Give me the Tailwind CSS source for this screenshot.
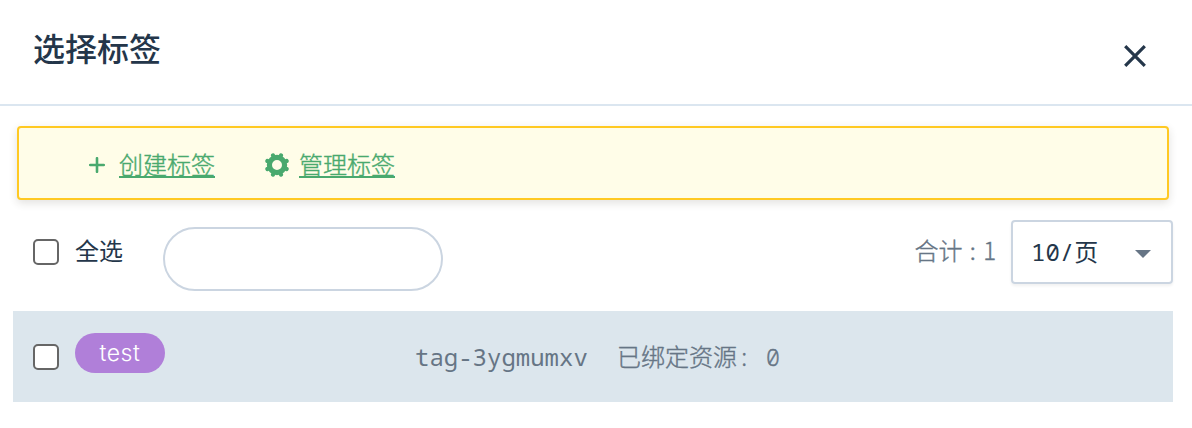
<!DOCTYPE html>
<html lang="zh-CN">
<head>
<meta charset="utf-8">
<title>选择标签</title>
<script src="https://cdn.jsdelivr.net/npm/@tailwindcss/browser@4"></script>
</head>
<body class="h-[428px] w-[1192px] overflow-hidden bg-white font-['Noto_Sans_CJK_SC',sans-serif] text-[24px] font-normal text-[#24364a]">
<header class="flex h-[106px] items-start justify-between border-b-2 border-[#dbe6f0] pl-[33px] pr-[46px]">
  <h1 class="mt-[23px] text-[32px] leading-[48px] font-medium">选择标签</h1>
  <button class="mt-[45px] size-[22px]" aria-label="关闭">
    <svg class="block size-[22px]" viewBox="0 0 22 22" fill="none" stroke="#24364a" stroke-width="3.2"><path d="M1.2 1.2 20.8 20.8M20.8 1.2 1.2 20.8"/></svg>
  </button>
</header>
<main class="pt-[20px]">
  <div class="ml-[17px] flex h-[74px] w-[1152px] items-center rounded-[4px] border-2 border-[#ffc922] bg-[#fffde8] pl-[70px] text-[#49a96e] shadow-[0_3px_8px_rgba(50,40,30,0.14)]">
    <svg class="mt-[3px] size-[16px] shrink-0" viewBox="0 0 16 16" stroke="#49a96e" stroke-width="2.6" stroke-linecap="round"><path d="M1.2 8H14.8M8 1.2V14.8"/></svg>
    <a class="ml-[14px] mt-[2px] h-[36px] leading-[36px] font-light underline decoration-2 underline-offset-[2px] [-webkit-text-stroke:0.4px_#49a96e]">创建标签</a>
    <svg class="ml-[50px] mt-[3px] size-[24px] shrink-0" viewBox="-12 -12 24 24" fill="none" stroke="#49a96e"><circle r="7.6" stroke-width="5.2"/><g stroke-width="4.2" stroke-linecap="round"><path d="M3.8 9.2 4 9.6M-3.8 9.2-4 9.6M3.8-9.2 4-9.6M-3.8-9.2-4-9.6M9.2 3.8 9.6 4M9.2-3.8 9.6-4M-9.2 3.8-9.6 4M-9.2-3.8-9.6-4"/></g></svg>
    <a class="ml-[10px] mt-[2px] h-[36px] leading-[36px] font-light underline decoration-2 underline-offset-[2px] [-webkit-text-stroke:0.4px_#49a96e]">管理标签</a>
  </div>
  <div class="flex h-[111px] items-start pl-[33px] pr-[19px]">
    <input type="checkbox" aria-label="全选" class="mt-[39px] size-[26px] shrink-0 appearance-none rounded-[5px] border-2 border-[#666] bg-white">
    <span class="ml-[16px] mt-[32px] leading-[36px]">全选</span>
    <input type="text" aria-label="搜索" class="ml-[40px] mt-[27px] h-[64px] w-[280px] rounded-full border-2 border-[#cbd5e1]">
    <span class="ml-auto mt-[32px] whitespace-pre leading-[36px] text-[#667585] font-light [-webkit-text-stroke:0.4px_#667585] [word-spacing:2px]">合计 : 1</span>
    <div class="ml-[15px] mt-[20px] flex h-[64px] w-[162px] items-center justify-between rounded-[4px] border-2 border-[#cbd5e1] pl-[18px] pr-[20px] font-['Noto_Sans_Mono','Liberation_Mono','Noto_Sans_CJK_SC',monospace] shadow-[0_2px_3px_rgba(0,0,0,0.06)]">
      <span class="leading-[36px]">10/页</span>
      <svg class="mt-[4px] h-[8px] w-[16px]" viewBox="0 0 16 8" fill="#667585"><path d="M0 0H16L8 8Z"/></svg>
    </div>
  </div>
  <div class="ml-[13px] flex h-[91px] w-[1160px] items-start bg-[#dce6ed] pl-[20px] text-[#667585]">
    <input type="checkbox" aria-label="test" class="mt-[33px] size-[26px] shrink-0 appearance-none rounded-[5px] border-2 border-[#666] bg-white">
    <span class="ml-[16px] mt-[22px] h-[40px] w-[90px] rounded-full bg-[#b07fd9] text-center font-['Inter',sans-serif] text-[23px] font-light tracking-[0.6px] leading-[41px] text-white">test</span>
    <span class="ml-[250px] mt-[28px] w-[202px] font-['Noto_Sans_Mono','Liberation_Mono',monospace] leading-[36px]">tag-3ygmumxv</span>
    <span class="mt-[28px] whitespace-pre font-['Noto_Sans_Mono','Liberation_Mono','Noto_Sans_CJK_SC',monospace] leading-[36px] font-light [-webkit-text-stroke:0.4px_#667585]">已绑定资源: 0</span>
  </div>
</main>
</body>
</html>
